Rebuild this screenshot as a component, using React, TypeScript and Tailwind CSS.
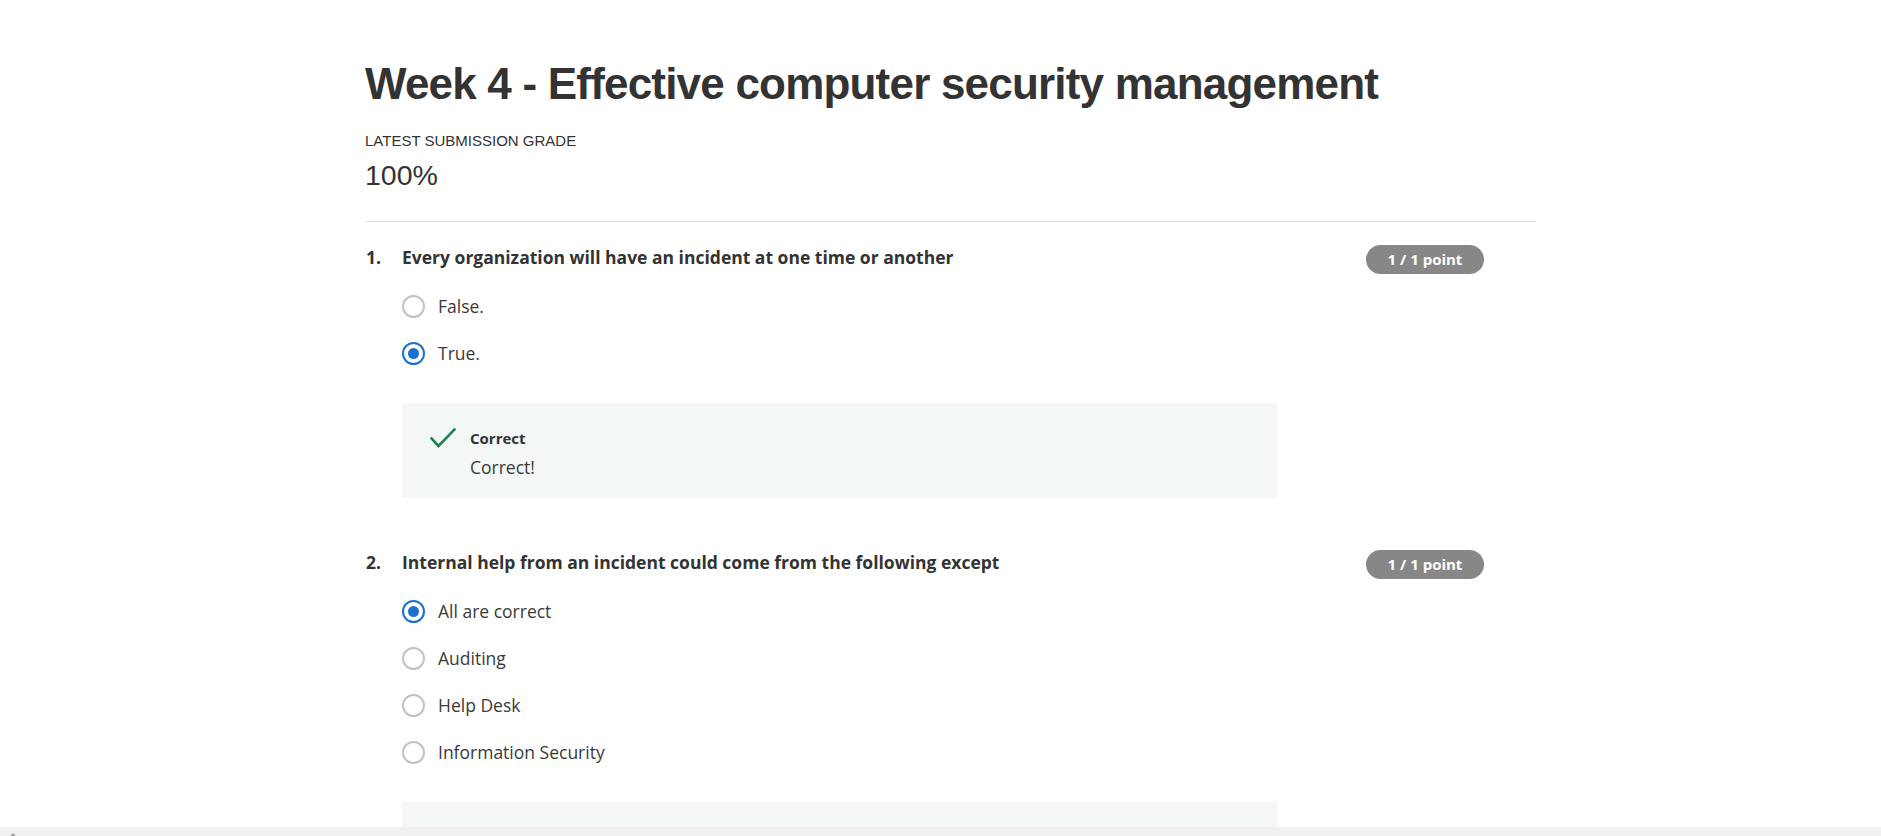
import React from "react";

type Option = { label: string; checked: boolean };
type Question = { n: number; text: string; options: Option[]; showFeedbackText: boolean };

const questions: Question[] = [
  {
    n: 1,
    text: "Every organization will have an incident at one time or another",
    options: [
      { label: "False.", checked: false },
      { label: "True.", checked: true },
    ],
    showFeedbackText: true,
  },
  {
    n: 2,
    text: "Internal help from an incident could come from the following except",
    options: [
      { label: "All are correct", checked: true },
      { label: "Auditing", checked: false },
      { label: "Help Desk", checked: false },
      { label: "Information Security", checked: false },
    ],
    showFeedbackText: false,
  },
];

function Radio({ checked }: { checked: boolean }) {
  if (checked) {
    return (
      <span className="flex h-[23px] w-[23px] shrink-0 items-center justify-center rounded-full border-[2.5px] border-[#1f6fd1] bg-white">
        <span className="h-[11px] w-[11px] rounded-full bg-[#1f6fd1]" />
      </span>
    );
  }
  return <span className="h-[23px] w-[23px] shrink-0 rounded-full border-2 border-[#c2c2c2] bg-white" />;
}

function Feedback({ showText }: { showText: boolean }) {
  return (
    <div className="mt-[38px] flex h-[95px] w-[875px] bg-[#f3f8f6] pl-[28px] pt-[25px]">
      {showText && (
        <>
          <svg width="26" height="20" viewBox="0 0 26 20" className="shrink-0" fill="none">
            <path d="M1.5 10.5 L8.5 18 L24.5 1.5" stroke="#1f8354" strokeWidth="2.6" strokeLinecap="square" />
          </svg>
          <div className="ml-[14px] flex flex-col">
            <div className="text-[15px] font-bold leading-[20px] text-[#333]">Correct</div>
            <div className="mt-[7px] text-[17.5px] leading-[24px] text-[#3a3a3a]">Correct!</div>
          </div>
        </>
      )}
    </div>
  );
}

function QuestionBlock({ q, first }: { q: Question; first: boolean }) {
  return (
    <div className={first ? "mt-[23px]" : "mt-[52px]"}>
      <div className="flex h-[29px] items-start justify-between pr-[52px]">
        <div className="flex items-center text-[17.5px] font-bold leading-[24px] text-[#333]">
          <span className="w-[37px] pl-[1px]">{q.n}.</span>
          <span>{q.text}</span>
        </div>
        <span className="flex h-[29px] w-[118px] items-center justify-center rounded-full bg-[#878787] text-[15px] font-bold text-white">
          1 / 1 point
        </span>
      </div>
      <div className="ml-[37px]">
        <div className="mt-[20px] flex flex-col gap-[23px]">
          {q.options.map((o) => (
            <div key={o.label} className="flex h-[24px] items-center">
              <Radio checked={o.checked} />
              <span className="ml-[13px] text-[17.5px] leading-[24px] text-[#3a3a3a]">{o.label}</span>
            </div>
          ))}
        </div>
        <Feedback showText={q.showFeedbackText} />
      </div>
    </div>
  );
}

export default function App() {
  return (
    <div
      className="relative h-[836px] w-full overflow-hidden bg-white"
      style={{ fontFamily: '"Open Sans", "Noto Sans", sans-serif' }}
    >
      <div className="ml-[365px] w-[1171px] pt-[60px]">
        <h1
          className="text-[44px] font-bold leading-[48px] tracking-[-0.8px] text-[#333]"
          style={{ fontFamily: '"Liberation Sans", Arial, sans-serif' }}
        >
          Week 4 - Effective computer security management
        </h1>
        <div
          className="mt-[24px] text-[15px] leading-[18px] text-[#333]"
          style={{ fontFamily: '"Liberation Sans", Arial, sans-serif' }}
        >
          LATEST SUBMISSION GRADE
        </div>
        <div
          className="mt-[9px] text-[28.5px] font-light leading-[32px] text-[#333]"
          style={{ fontFamily: '"Liberation Sans", Arial, sans-serif' }}
        >
          100%
        </div>
        <div className="mt-[30px] h-px w-full bg-[#e1e1e1]" />
        {questions.map((q, i) => (
          <QuestionBlock key={q.n} q={q} first={i === 0} />
        ))}
      </div>
      <div className="fixed bottom-0 left-0 right-0 h-[9px] bg-[#f0f0f0]">
        <span className="absolute bottom-0 left-[10px] h-0 w-0 border-b-[3px] border-l-[3px] border-r-[3px] border-b-[#a3a3a3] border-l-transparent border-r-transparent" />
      </div>
    </div>
  );
}
